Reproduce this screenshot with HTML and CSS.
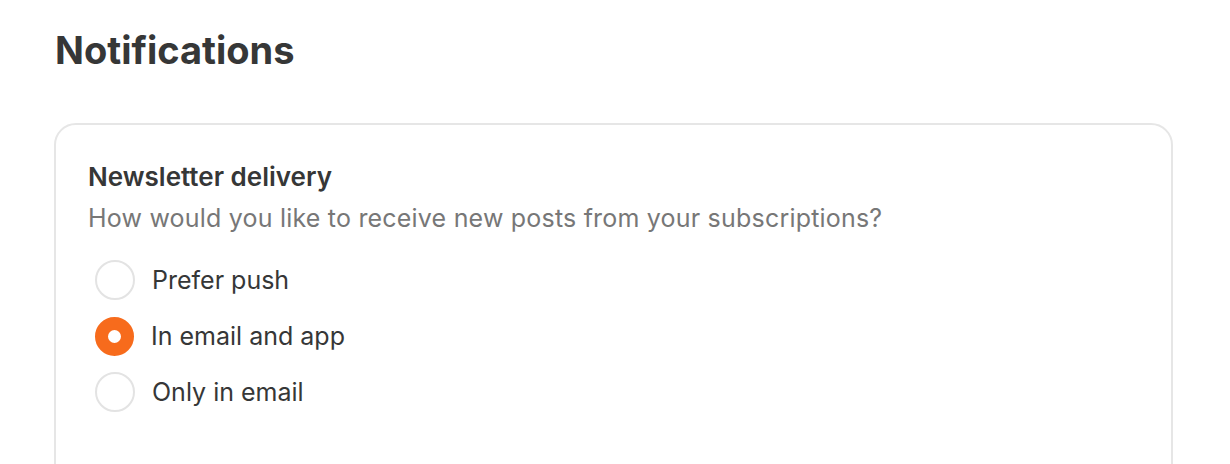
FILE: index.html
```html
<!DOCTYPE html>
<html lang="en">
<head>
    <meta charset="UTF-8">
    <meta name="viewport" content="width=device-width, initial-scale=1.0">
    <title>Notifications</title>
    <link rel="stylesheet" href="styles.css">
</head>
<body>
    <div class="page">
        <h1>Notifications</h1>
        <div class="card">
            <h2>Newsletter delivery</h2>
            <p class="hint">How would you like to receive new posts from your subscriptions?</p>
            <form class="options">
                <label class="option">
                    <input type="radio" name="delivery" value="push">
                    <span class="dot"></span>
                    <span>Prefer push</span>
                </label>
                <label class="option">
                    <input type="radio" name="delivery" value="both" checked>
                    <span class="dot"></span>
                    <span>In email and app</span>
                </label>
                <label class="option">
                    <input type="radio" name="delivery" value="email">
                    <span class="dot"></span>
                    <span>Only in email</span>
                </label>
            </form>
        </div>
    </div>
</body>
</html>
```

FILE: styles.css
```css
body {
    font-family: Inter, "Noto Sans", sans-serif;
    margin: 0;
    padding: 0;
    background-color: #fff;
    color: #363737;
}

.page {
    padding: 26px 57px 0 54px;
}

h1 {
    font-size: 38px;
    font-weight: 700;
    margin: 0 0 49px 1px;
    line-height: 48px;
}

.card {
    border: 2px solid #e6e6e6;
    border-radius: 22px;
    padding: 36px 32px 60px 32px;
    height: 400px;
}

h2 {
    font-size: 26px;
    font-weight: 600;
    margin: 0;
    line-height: 32px;
}

.hint {
    font-size: 25px;
    letter-spacing: 0.2px;
    color: #777;
    margin: 9px 0 26px 0;
    line-height: 32px;
}

.options {
    display: flex;
    flex-direction: column;
    gap: 16px;
}

.option {
    display: flex;
    align-items: center;
    gap: 17px;
    font-size: 25px;
    line-height: 40px;
    cursor: pointer;
}

.option input {
    display: none;
}

.dot {
    width: 36px;
    height: 36px;
    border: 2px solid #e3e3e3;
    border-radius: 50%;
    margin-left: 7px;
    box-sizing: content-box;
}

.option input:checked + .dot {
    width: 13px;
    height: 13px;
    border: 13.5px solid #f76b1c;
}
```
